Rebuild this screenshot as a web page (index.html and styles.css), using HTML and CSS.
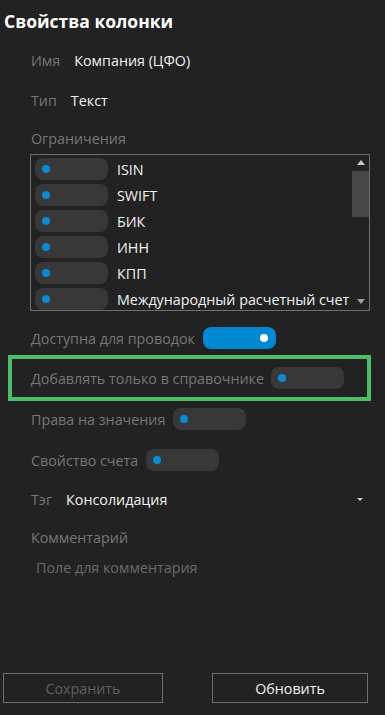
FILE: index.html
```html
<!DOCTYPE html>
<html lang="ru">
<head>
    <meta charset="UTF-8">
    <meta name="viewport" content="width=device-width, initial-scale=1.0">
    <title>Свойства колонки</title>
    <link rel="stylesheet" href="styles.css">
</head>
<body>
    <div id="panel">
        <h1 class="title">Свойства колонки</h1>

        <div class="row row-name">
            <span class="label">Имя</span>
            <span class="value">Компания (ЦФО)</span>
        </div>

        <div class="row row-type">
            <span class="label">Тип</span>
            <span class="value">Текст</span>
        </div>

        <div class="row row-limits">
            <span class="label">Ограничения</span>
        </div>

        <div class="list">
            <div class="list-items">
                <div class="list-item"><span class="toggle"><span class="knob"></span></span><span class="item-text">ISIN</span></div>
                <div class="list-item"><span class="toggle"><span class="knob"></span></span><span class="item-text">SWIFT</span></div>
                <div class="list-item"><span class="toggle"><span class="knob"></span></span><span class="item-text">БИК</span></div>
                <div class="list-item"><span class="toggle"><span class="knob"></span></span><span class="item-text">ИНН</span></div>
                <div class="list-item"><span class="toggle"><span class="knob"></span></span><span class="item-text">КПП</span></div>
                <div class="list-item"><span class="toggle"><span class="knob"></span></span><span class="item-text">Международный расчетный счет</span></div>
            </div>
            <div class="scrollbar">
                <span class="arrow arrow-up"></span>
                <span class="thumb"></span>
                <span class="arrow arrow-down"></span>
            </div>
        </div>

        <div class="row row-posting">
            <span class="label">Доступна для проводок</span>
            <span class="toggle on"><span class="knob"></span></span>
        </div>

        <div class="highlight">
            <div class="row">
                <span class="label">Добавлять только в справочнике</span>
                <span class="toggle"><span class="knob"></span></span>
            </div>
        </div>

        <div class="row row-rights">
            <span class="label">Права на значения</span>
            <span class="toggle"><span class="knob"></span></span>
        </div>

        <div class="row row-account">
            <span class="label">Свойство счета</span>
            <span class="toggle"><span class="knob"></span></span>
        </div>

        <div class="row row-tag">
            <span class="label">Тэг</span>
            <span class="value">Консолидация</span>
            <span class="caret"></span>
        </div>

        <div class="row row-comment">
            <span class="label">Комментарий</span>
        </div>

        <div class="row row-comment-field">
            <span class="placeholder">Поле для комментария</span>
        </div>

        <div class="buttons">
            <button class="btn btn-save" disabled>Сохранить</button>
            <button class="btn btn-update">Обновить</button>
        </div>
    </div>
</body>
</html>
```

FILE: styles.css
```css
body {
    margin: 0;
    padding: 0;
    background-color: #222222;
    font-family: 'Open Sans', 'Noto Sans', sans-serif;
    font-size: 14.3px;
    color: #f2f2f2;
}

#panel {
    height: 715px;
    display: flex;
    flex-direction: column;
}

.title {
    margin: 0;
    padding: 10px 4px 0;
    font-size: 17.5px;
    font-weight: 700;
    line-height: 22px;
    color: #ffffff;
}

.row {
    display: flex;
    align-items: center;
    height: 24px;
    padding-left: 31px;
    white-space: nowrap;
}

.label {
    color: #777777;
}

.value {
    margin-left: 14px;
    color: #f2f2f2;
}

.row-name { margin-top: 16px; }
.row-type { margin-top: 16px; }
.row-limits { margin-top: 14px; }

/* list of restrictions */
.list {
    margin: 4px 0 0 30px;
    width: 338px;
    height: 155px;
    border: 1px solid #6e6e6e;
    display: flex;
    overflow: hidden;
}

.list-items {
    flex: 1;
    padding: 1px 0 0 4px;
    min-width: 0;
}

.list-item {
    display: flex;
    align-items: center;
    height: 26px;
    white-space: nowrap;
}

.item-text {
    margin-left: 9px;
    color: #f2f2f2;
}

.scrollbar {
    width: 17px;
    display: flex;
    flex-direction: column;
    align-items: center;
}

.arrow {
    width: 0;
    height: 0;
    border-left: 4px solid transparent;
    border-right: 4px solid transparent;
}

.arrow-up {
    margin-top: 5px;
    border-bottom: 5px solid #c8c8c8;
}

.arrow-down {
    margin-top: auto;
    margin-bottom: 6px;
    border-top: 5px solid #a0a0a0;
}

.thumb {
    margin-top: 6px;
    width: 17px;
    height: 46px;
    background-color: #474747;
}

/* switches */
.toggle {
    position: relative;
    flex: none;
    width: 73px;
    height: 22px;
    border-radius: 8px;
    background-color: #383838;
}

.knob {
    position: absolute;
    top: 7px;
    left: 7px;
    width: 8px;
    height: 8px;
    border-radius: 50%;
    background-color: #0a8bd6;
}

.toggle.on {
    background-color: #0288d1;
}

.toggle.on .knob {
    left: auto;
    right: 8px;
    background-color: #ffffff;
}

.row .toggle {
    margin-left: 8px;
}

.row-posting { margin-top: 15px; }

.highlight {
    margin: 5px 0 0 8px;
    width: 355px;
    height: 38px;
    border: 4px solid #4cbd68;
    display: flex;
    align-items: center;
}

.highlight .row {
    padding-left: 19px;
}

.highlight .toggle {
    margin-left: 7px;
}

.row-rights { margin-top: 6px; }
.row-account { margin-top: 17px; }
.row-tag { margin-top: 15px; }

.caret {
    margin-left: auto;
    margin-right: 22px;
    width: 0;
    height: 0;
    border-left: 3px solid transparent;
    border-right: 3px solid transparent;
    border-top: 3px solid #cfcfcf;
}

.row-comment { margin-top: 14px; }

.row-comment-field {
    margin-top: 6px;
    padding-left: 36px;
}

.placeholder {
    color: #6a6a6a;
}

.buttons {
    margin-top: auto;
    margin-bottom: 12px;
    display: flex;
    justify-content: space-between;
    padding: 0 17px 0 3px;
}

.btn {
    height: 30px;
    background-color: #222222;
    border: 1px solid #6e6e6e;
    font-family: inherit;
    font-size: 14.3px;
    padding: 0;
}

.btn-save {
    width: 160px;
    color: #5f5f5f;
}

.btn-update {
    width: 156px;
    color: #f2f2f2;
}
```
